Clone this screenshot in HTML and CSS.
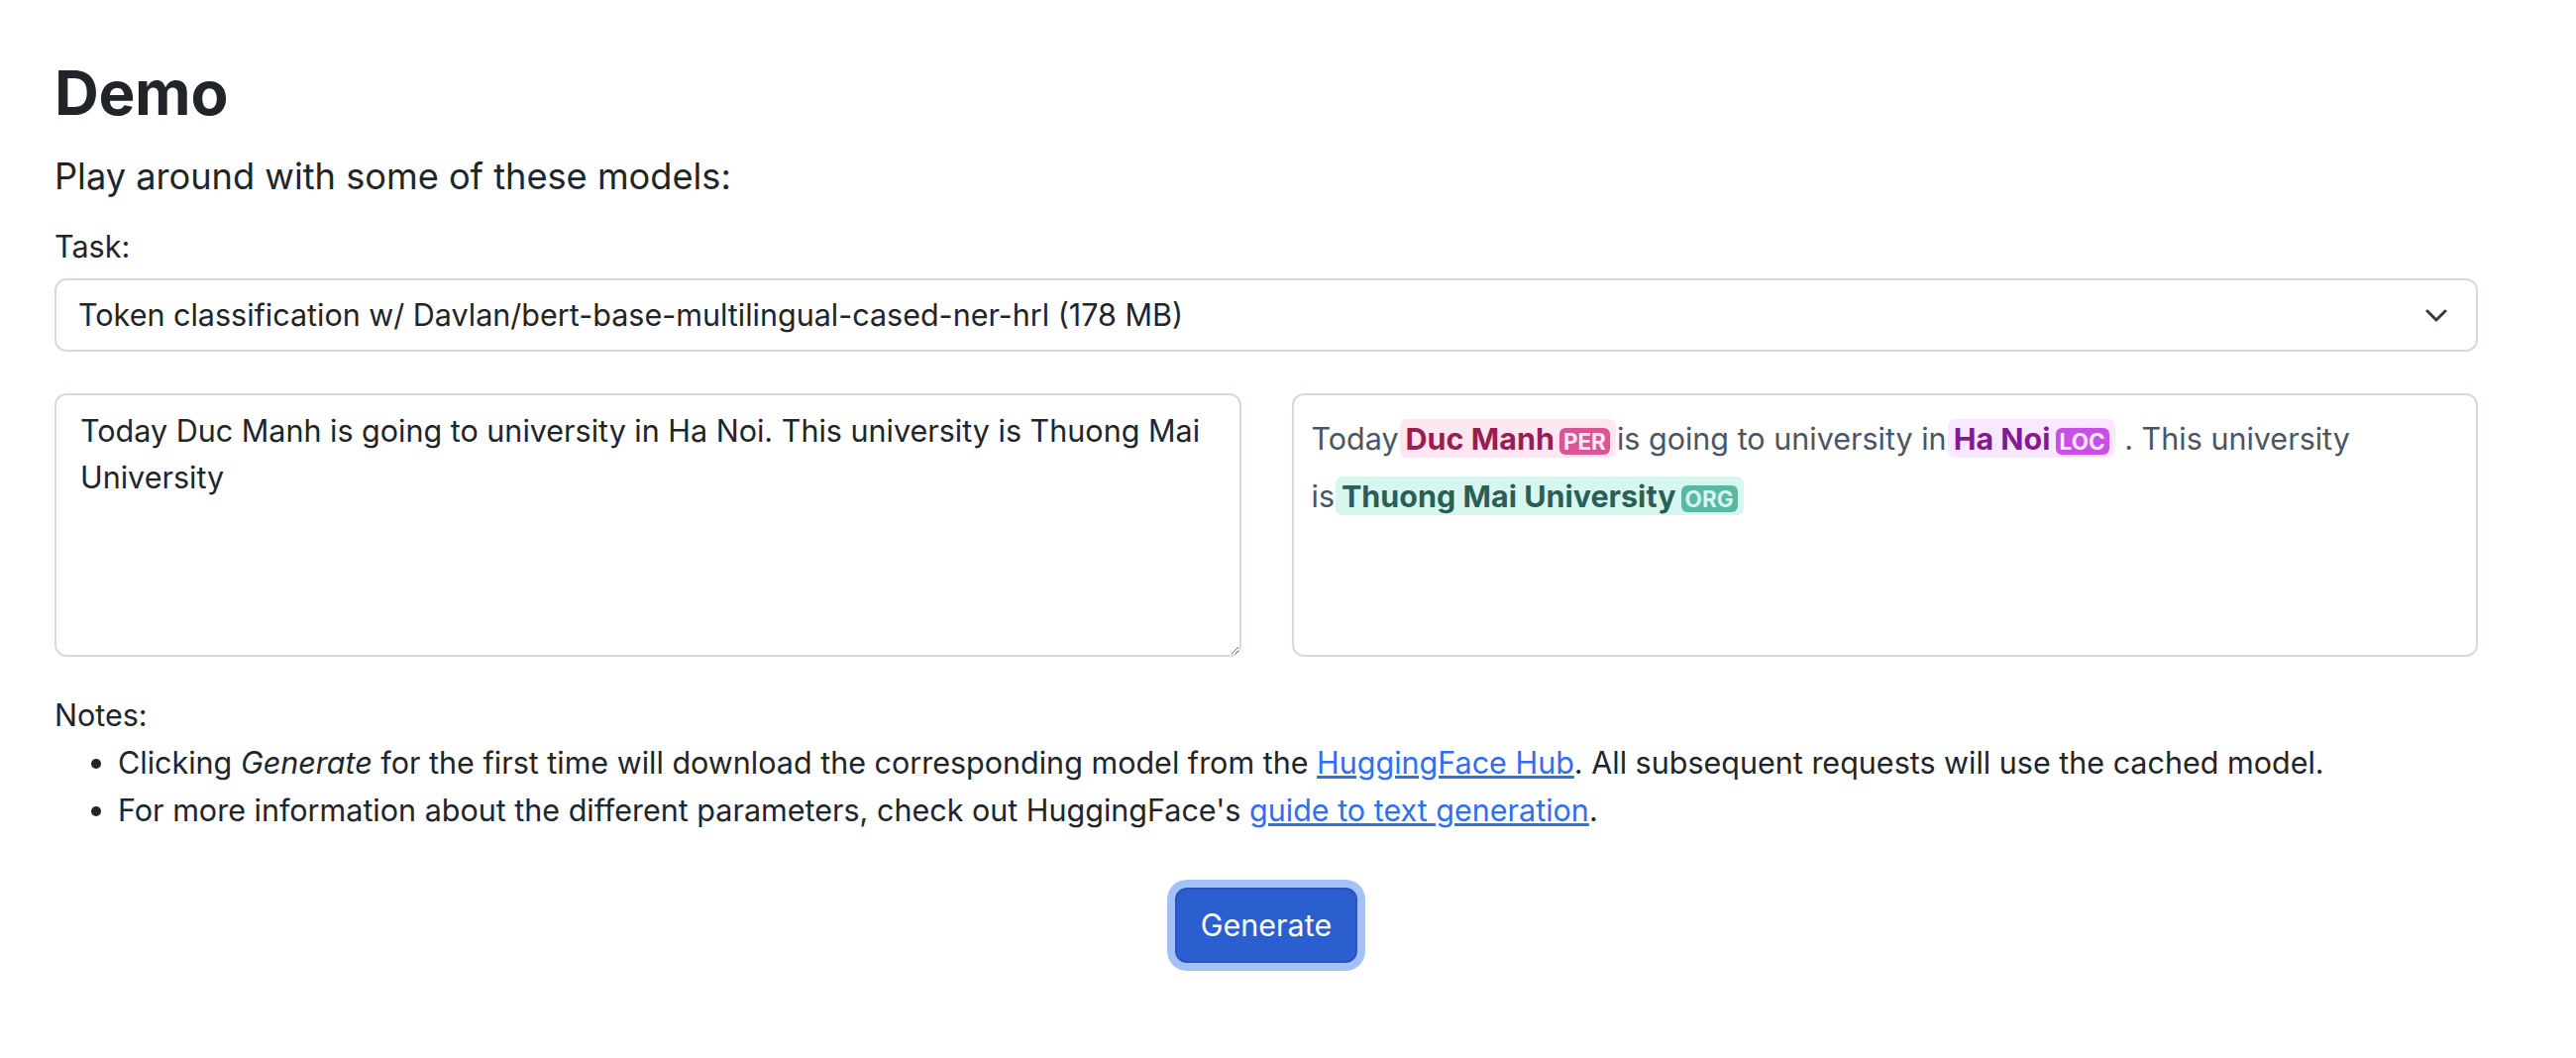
FILE: index.html
```html
<!DOCTYPE html>
<html lang="en">
<head>
<meta charset="utf-8">
<title>Demo</title>
<link rel="stylesheet" href="styles.css">
</head>
<body>
<main class="page">
  <h1 class="title">Demo</h1>
  <p class="lead">Play around with some of these models:</p>
  <label class="label">Task:</label>
  <div class="select">
    <span class="select-text">Token classification w/ Davlan/bert-base-multilingual-cased-ner-hrl (178 MB)</span>
    <svg class="chevron" width="22" height="13" viewBox="0 0 22 13"><polyline points="2,2 11,11 20,2" fill="none" stroke="#343a40" stroke-width="3" stroke-linecap="round" stroke-linejoin="round"/></svg>
  </div>
  <div class="io">
    <textarea class="input" readonly>Today Duc Manh is going to university in Ha Noi. This university is Thuong Mai University</textarea>
    <div class="output">Today<mark class="ent per">Duc Manh<span class="tag">PER</span></mark>is going to university in<mark class="ent loc">Ha Noi<span class="tag">LOC</span></mark> . This university is<mark class="ent org">Thuong Mai University<span class="tag">ORG</span></mark></div>
  </div>
  <div class="notes">
    <div class="notes-title">Notes:</div>
    <ul class="notes-list">
      <li>Clicking <em>Generate</em> for the first time will download the corresponding model from the <a href="#">HuggingFace Hub</a>. All subsequent requests will use the cached model.</li>
      <li>For more information about the different parameters, check out HuggingFace's <a href="#">guide to text generation</a>.</li>
    </ul>
  </div>
  <div class="actions">
    <button class="btn" type="button">Generate</button>
  </div>
</main>
</body>
</html>
```

FILE: styles.css
```css
* { box-sizing: border-box; }
html, body { margin: 0; padding: 0; background: #fff; }
body {
  font-family: Inter, "Noto Sans", "Liberation Sans", sans-serif;
  color: #212529;
  font-size: 30.5px;
  line-height: 47px;
}
.page {
  padding: 55px 99px 40px 55px;
}
.title {
  margin: 0 0 18px 0;
  font-size: 62px;
  line-height: 77px;
  font-weight: 700;
  letter-spacing: -0.3px;
}
.lead {
  margin: 0 0 19px 0;
  font-size: 36.2px;
  line-height: 57px;
  font-weight: 400;
}
.label {
  display: block;
  margin-bottom: 9px;
  line-height: 46px;
}
.select {
  display: flex;
  align-items: center;
  justify-content: space-between;
  height: 74px;
  border: 2px solid #d6dadf;
  border-radius: 12px;
  padding: 0 29px 0 22px;
  line-height: 46px;
}
.chevron { display: block; }
.io {
  display: grid;
  grid-template-columns: 1fr 1fr;
  column-gap: 51px;
  margin-top: 42px;
}
.input {
  display: block;
  width: 100%;
  height: 266px;
  margin: 0;
  border: 2px solid #d6dadf;
  border-radius: 12px;
  padding: 12px 24px;
  font-family: Inter, "Noto Sans", "Liberation Sans", sans-serif;
  font-size: 30.5px;
  line-height: 47px;
  color: #212529;
  resize: vertical;
  outline: none;
  background: #fff;
}
.output {
  height: 266px;
  border: 2px solid #d6dadf;
  border-radius: 12px;
  padding: 16px 18px;
  font-size: 30.5px;
  line-height: 55px;
  color: #4b5563;
}
.ent {
  padding: 1px 6px;
  margin: 0 1px;
  border-radius: 7px;
  font-weight: 700;
}
.tag {
  margin-left: 5px;
  padding: 0 4px;
  font-size: 22.5px;
  border-radius: 6px;
  font-weight: 700;
}
.per { background: #fce7f3; color: #9a1d4f; }
.per .tag { background: #db5596; color: #fce7f3; }
.loc { background: #fae8ff; color: #86198f; }
.loc .tag { background: #c94fe7; color: #fae8ff; }
.org { background: #d6f7ef; color: #2b5e55; }
.org .tag { background: #58b8a4; color: #d6f7ef; }
.notes {
  margin-top: 35px;
}
.notes-title { line-height: 48px; }
.notes-list {
  margin: 0;
  padding-left: 64px;
  line-height: 48px;
}
.notes-list a { color: #2f6fed; text-decoration: underline; }
.actions {
  display: flex;
  justify-content: center;
  margin-top: 54px;
}
.btn {
  font-family: Inter, "Noto Sans", "Liberation Sans", sans-serif;
  font-size: 30.5px;
  line-height: 46px;
  color: #fff;
  background: #2b5ecf;
  border: 2px solid #2553c0;
  border-radius: 12px;
  padding: 13px 24px;
  box-shadow: 0 0 0 8px #a3c0f7;
  cursor: pointer;
}
```
